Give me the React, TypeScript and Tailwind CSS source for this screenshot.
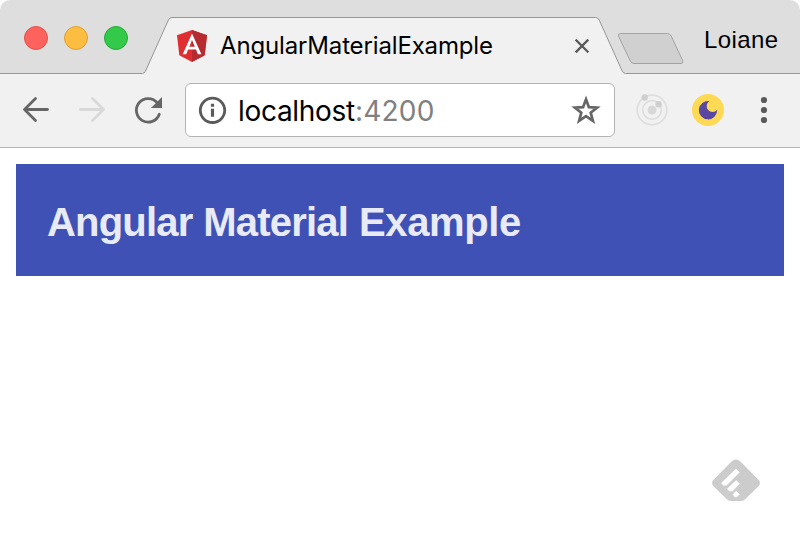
import type { ReactNode } from "react";

const sans = "font-['Inter','Liberation_Sans',sans-serif]";
const helvetica = "font-['Liberation_Sans',Arial,sans-serif]";

function Light({ className }: { className: string }) {
  return <span className={`size-6 rounded-full border ${className}`} />;
}

function AngularLogo() {
  return (
    <svg className="h-8 w-[30px] shrink-0" viewBox="0 0 30 32">
      <path d="M15 0 0 5.3l2.3 20L15 32l12.700-6.700L30 5.300Z" fill="#df2e31" />
      <path d="M15 0v32l12.700-6.700L30 5.300Z" fill="#b52b2f" />
      <path d="M15 3.500 5.700 24.300h3.500l1.900-4.700h7.900l1.900 4.700h3.500Zm0 6.600 2.800 6.700h-5.500Z" fill="#fff" fillRule="evenodd" />
    </svg>
  );
}

function TabStrip() {
  return (
    <header className="relative flex h-[74px] bg-[#dedede]">
      <svg className="absolute inset-0" width="800" height="74" viewBox="0 0 800 74">
        <path
          d="M-2 73.500H142.500Q144.500 73.300 145.300 71.500L168.400 20Q169.600 17.500 172 17.500H595.500Q598 17.500 599.200 20L622.200 71Q623.300 73.500 625.500 73.500H802V76H-2Z"
          fill="#f1f1f1"
          stroke="#969696"
        />
        <path
          d="M620.500 33.500H667.500Q670 33.500 671.200 36L682.600 60.500Q683.700 63.500 681 63.500H634Q631.500 63.500 630.300 61L618.500 36.200Q617.700 33.500 620.500 33.500Z"
          fill="#d0d0d0"
          stroke="#a3a3a3"
        />
      </svg>
      <div className="relative flex w-[145px] gap-4 pt-[26px] pl-6">
        <Light className="border-[#e2504c] bg-[#fe625d]" />
        <Light className="border-[#df9f35] bg-[#fdbd41]" />
        <Light className="border-[#24a936] bg-[#34ca49]" />
      </div>
      <div className="relative flex h-[62px] w-[480px] items-center pt-[30px] pl-8">
        <AngularLogo />
        <span className={`ml-[13px] w-[350px] text-2xl leading-8 tracking-[-0.15px] whitespace-nowrap text-black ${sans}`}>
          AngularMaterialExample
        </span>
        <svg className="ml-1 size-4 shrink-0" viewBox="0 0 16 16">
          <path d="m2.500 2.500 11 11M13.500 2.500l-11 11" stroke="#5a5a5a" strokeWidth="2.300" strokeLinecap="square" />
        </svg>
      </div>
      <span className={`relative ml-[79px] pt-[24px] text-2xl leading-8 tracking-[0.4px] text-black ${helvetica}`}>Loiane</span>
    </header>
  );
}

function Icon({ className, children }: { className?: string; children: ReactNode }) {
  return (
    <svg className={`size-8 shrink-0 ${className ?? ""}`} viewBox="0 0 32 32" fill="none">
      {children}
    </svg>
  );
}

function Toolbar() {
  return (
    <nav className="flex h-[74px] items-center border-b border-[#b5b5b5] bg-[#f1f1f1] pb-px pl-5">
      <Icon>
        <path d="M27.500 15.500H5M15.500 4.500 4.500 15.500l11 11" stroke="#666" strokeWidth="2.800" strokeLinecap="round" strokeLinejoin="round" />
      </Icon>
      <Icon className="ml-6">
        <path d="M4.500 15.500H27M16.500 4.500l11 11-11 11" stroke="#d9d9d9" strokeWidth="2.800" strokeLinecap="round" strokeLinejoin="round" />
      </Icon>
      <Icon className="ml-6">
        <path d="M27.300 20.300A11.800 11.800 0 1 1 25 8.500" stroke="#666" strokeWidth="2.800" strokeLinecap="round" />
        <path d="M30 3v11H19Z" fill="#666" />
      </Icon>
      <div className="ml-[21px] flex h-[54px] w-[430px] items-center rounded-md border border-[#b3b3b3] bg-white">
        <Icon className="ml-[10px]">
          <circle cx="16.500" cy="16.300" r="12.200" stroke="#5a5a5a" strokeWidth="2.800" />
          <path d="M16.500 9.800v3M16.500 14.800v8" stroke="#5a5a5a" strokeWidth="3.200" />
        </Icon>
        <span className={`ml-[10px] w-[332px] pt-0.5 text-[28px] leading-9 tracking-[-0.3px] whitespace-nowrap text-black ${sans}`}>
          localhost<span className="tracking-[0.2px] text-[#808080]">:4200</span>
        </span>
        <Icon>
          <path d="m16 5.300 2.900 7.900 8.200.400-6.400 5.100 2.200 8.100-6.900-4.600-6.900 4.600 2.200-8.100-6.400-5.100 8.200-.400Z" stroke="#666" strokeWidth="2.700" />
        </Icon>
      </div>
      <Icon className="ml-[21px]">
        <circle cx="16" cy="16" r="14.800" stroke="#dedede" strokeWidth="1.700" />
        <circle cx="16" cy="16" r="9.300" stroke="#dedede" strokeWidth="1.700" />
        <circle cx="16" cy="16" r="4.500" fill="#d8d8d8" />
        <circle cx="8.700" cy="3.500" r="3.200" fill="#cfcfcf" />
        <circle cx="22.600" cy="10.200" r="3.200" fill="#cfcfcf" />
      </Icon>
      <Icon className="ml-6">
        <circle cx="16" cy="16" r="16" fill="#fdd954" />
        <path d="M17.500 7.100A5.900 5.900 0 1 0 25.200 15.800 9.200 9.200 0 1 1 17.500 7.100Z" fill="#5a48a0" />
      </Icon>
      <Icon className="ml-6">
        <g fill="#5a5a5a">
          <circle cx="16" cy="6" r="3.100" />
          <circle cx="16" cy="16" r="3.100" />
          <circle cx="16" cy="26" r="3.100" />
        </g>
      </Icon>
    </nav>
  );
}

export default function App() {
  return (
    <div className="flex h-[544px] w-[800px] flex-col overflow-hidden rounded-t-[10px] bg-white">
      <TabStrip />
      <Toolbar />
      <main className="flex flex-1 flex-col p-4">
        <div className="flex h-28 items-center bg-[#3f51b5] px-[31px]">
          <h1 className={`mt-1 text-[40px] leading-none font-bold tracking-[-0.8px] whitespace-nowrap text-[#e8eaf6] [word-spacing:0.5px] ${helvetica}`}>
            Angular Material <span className="tracking-[-0.35px]">Example</span>
          </h1>
        </div>
        <svg className="mt-auto mr-6 mb-[26px] h-[43px] w-12 self-end" viewBox="0 0 48 43">
          <path d="M19.800 2.200Q24-1.200 28.200 2.200L46.500 20.800Q49.500 24 46.500 27.200L33.500 40Q31.500 42 29 42H19Q16.500 42 14.500 40L1.500 27.200Q-1.500 24 1.500 20.800Z" fill="#ccc" />
          <path d="m24 10 3.300 3.300L14.500 26.300h-3.200l-1.800-2.200ZM24.200 21.500l3.200 3.200-7 7.300h-3.200l-1.900-2.200ZM24 32.200l3.300 3-2.200 2.600h-2.500L21 35.500Z" stroke="#fff" strokeWidth=".6" fill="#fff" />
        </svg>
      </main>
    </div>
  );
}
